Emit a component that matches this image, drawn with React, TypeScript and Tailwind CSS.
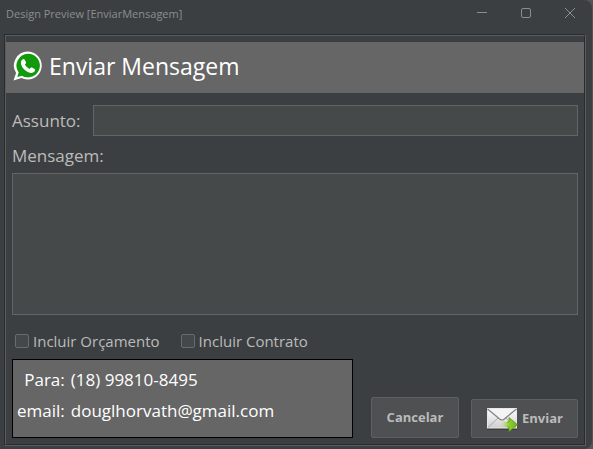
import { useState } from "react";

function WhatsAppIcon() {
  return (
    <svg width="30" height="30" viewBox="0 0 30 30" aria-hidden="true">
      <path d="M15 0.5a14 14 0 1 1-6.600 26.500L0.500 29.500l2.600-7.500A14 14 0 0 1 15 .5z" fill="#fff" />
      <path d="M15.200 2.800a11.800 11.800 0 1 1-6.200 21.900L4.300 26l1.400-4.500A11.800 11.800 0 0 1 15.200 2.800z" fill="#129a0c" />
      <path
        d="M9.300 8.600c.7-.8 1.900-.8 2.400.1l1.300 2.600c.3.700-.1 1.300-1.100 2.300 1 1.900 2.500 3.400 4.700 4.400 1.200-1.500 1.600-1.700 2.300-1.400l2.700 1.400c.8.400.5 1.900-.3 2.800-1.400 1.500-3.600 1.400-6 .4-3.100-1.300-5.400-3.700-6.800-6.700-1-2.300-.7-4.500.8-5.900z"
        fill="#fff"
      />
    </svg>
  );
}

function SendMailIcon() {
  return (
    <svg width="32" height="26" viewBox="0 0 32 26" aria-hidden="true">
      <defs>
        <linearGradient id="paper" x1="0" y1="0" x2="0" y2="1">
          <stop offset="0" stopColor="#ffffff" />
          <stop offset="1" stopColor="#cfcfcf" />
        </linearGradient>
        <linearGradient id="arrow" x1="0" y1="0" x2="1" y2="0">
          <stop offset="0" stopColor="#a4d65a" stopOpacity="0" />
          <stop offset="0.5" stopColor="#8ed02a" />
          <stop offset="1" stopColor="#6db018" />
        </linearGradient>
      </defs>
      <rect x="1" y="22" width="30" height="2" fill="#333638" opacity="0.7" />
      <rect x="1.500" y="2.500" width="29" height="19.500" fill="url(#paper)" stroke="#e9e9e9" />
      <path d="M2 21.500l10-9.500M30 21.500L20 12" stroke="#aaaaaa" fill="none" />
      <path d="M1.500 3L14 13.200q2 1.500 4 0L30.500 3" stroke="#858585" strokeWidth="1.300" fill="#f4f4f4" />
      <path d="M15 16h8v-4.500l8.500 7.300-8.500 6.700V21h-8z" fill="url(#arrow)" />
      <path d="M21 16h2v-4.500l8.500 7.300-8.500 6.700V21h-2" fill="none" stroke="#568f12" strokeWidth="0.700" />
    </svg>
  );
}

function TitleBar() {
  return (
    <header className="-mr-1.5 flex h-[34px] items-start justify-between pl-0.5 text-[#8b8e8f]">
      <h1 className="pt-1 text-[11px] leading-5">Design Preview [EnviarMensagem]</h1>
      <div className="flex h-[26px]">
        <button aria-label="Minimizar" className="flex w-11 items-center justify-center">
          <svg width="10" height="10" viewBox="0 0 10 10" fill="none" stroke="currentColor">
            <path d="M0 4.500h10" />
          </svg>
        </button>
        <button aria-label="Maximizar" className="flex w-11 items-center justify-center">
          <svg width="10" height="10" viewBox="0 0 10 10" fill="none" stroke="currentColor">
            <rect x=".5" y=".5" width="9" height="9" rx="1.500" />
          </svg>
        </button>
        <button aria-label="Fechar" className="flex w-11 items-center justify-center">
          <svg width="10" height="10" viewBox="0 0 10 10" fill="none" stroke="currentColor">
            <path d="M0 0l10 10M10 0L0 10" />
          </svg>
        </button>
      </div>
    </header>
  );
}

function Option({ label }: { label: string }) {
  const [checked, setChecked] = useState(false);
  return (
    <label className="flex items-center gap-1">
      <input
        type="checkbox"
        checked={checked}
        onChange={(e) => setChecked(e.target.checked)}
        className="size-3.5 appearance-none rounded-xs border border-[#6b6b6b] bg-[#43494a] checked:bg-[#8b8e8f]"
      />
      <span className="text-[15px] leading-5">{label}</span>
    </label>
  );
}

export default function App() {
  return (
    <div className="bg-[#5a5356] font-['Open_Sans','Noto_Sans',sans-serif] text-[#bbbbbb]">
      <div className="mr-px rounded-r-lg bg-[#3c3f41] pr-1.5 pb-[3px] pl-1">
        <TitleBar />
        <main className="border border-t-[#292b2c] border-r-[#5a5d5f] border-b-[#5a5d5f] border-l-[#292b2c]">
          <div className="border border-t-[#5a5d5f] border-r-[#292b2c] border-b-[#292b2c] border-l-[#5a5d5f] pt-1.5 pb-1.5">
            <div className="flex h-[51px] items-center gap-1.5 bg-[#666666] pb-1 pl-[7px] text-white">
              <WhatsAppIcon />
              <h2 className="text-[23px] leading-8">Enviar Mensagem</h2>
            </div>
            <form className="px-1.5 pt-3" onSubmit={(e) => e.preventDefault()}>
              <div className="flex items-center gap-3">
                <label htmlFor="subject" className="text-[17px] leading-6">
                  Assunto:
                </label>
                <input
                  id="subject"
                  className="h-[31px] min-w-0 flex-1 border border-[#646464] bg-[#45494a] px-1.5 outline-none"
                />
              </div>
              <label htmlFor="message" className="mt-2 block text-[17px] leading-6">
                Mensagem:
              </label>
              <textarea
                id="message"
                className="mt-[5px] block h-[142px] w-full resize-none border border-[#646464] bg-[#45494a] p-1.5 outline-none"
              />
              <div className="mt-4 flex gap-[21px] pl-[3px]">
                <Option label="Incluir Orçamento" />
                <Option label="Incluir Contrato" />
              </div>
              <div className="mt-2 flex items-end gap-3">
                <dl className="mr-1.5 grid h-[79px] min-w-0 flex-1 grid-cols-[auto_1fr] content-center gap-x-1.5 gap-y-[7px] border border-black bg-[#666666] pb-1.5 pl-1 text-[17px] leading-6 text-white">
                  <dt className="text-right">Para:</dt>
                  <dd>(18) 99810-8495</dd>
                  <dt className="text-right">email:</dt>
                  <dd>douglhorvath@gmail.com</dd>
                </dl>
                <button
                  type="button"
                  className="h-[41px] w-[88px] rounded-xs border border-[#5e6060] bg-[#4e5052] text-[13px] font-bold"
                >
                  Cancelar
                </button>
                <button
                  type="submit"
                  className="flex h-[39px] w-[107px] items-center justify-center gap-1 rounded-xs border border-[#5e6060] bg-[#4e5052] text-[13px] font-bold"
                >
                  <SendMailIcon />
                  Enviar
                </button>
              </div>
            </form>
          </div>
        </main>
      </div>
    </div>
  );
}
